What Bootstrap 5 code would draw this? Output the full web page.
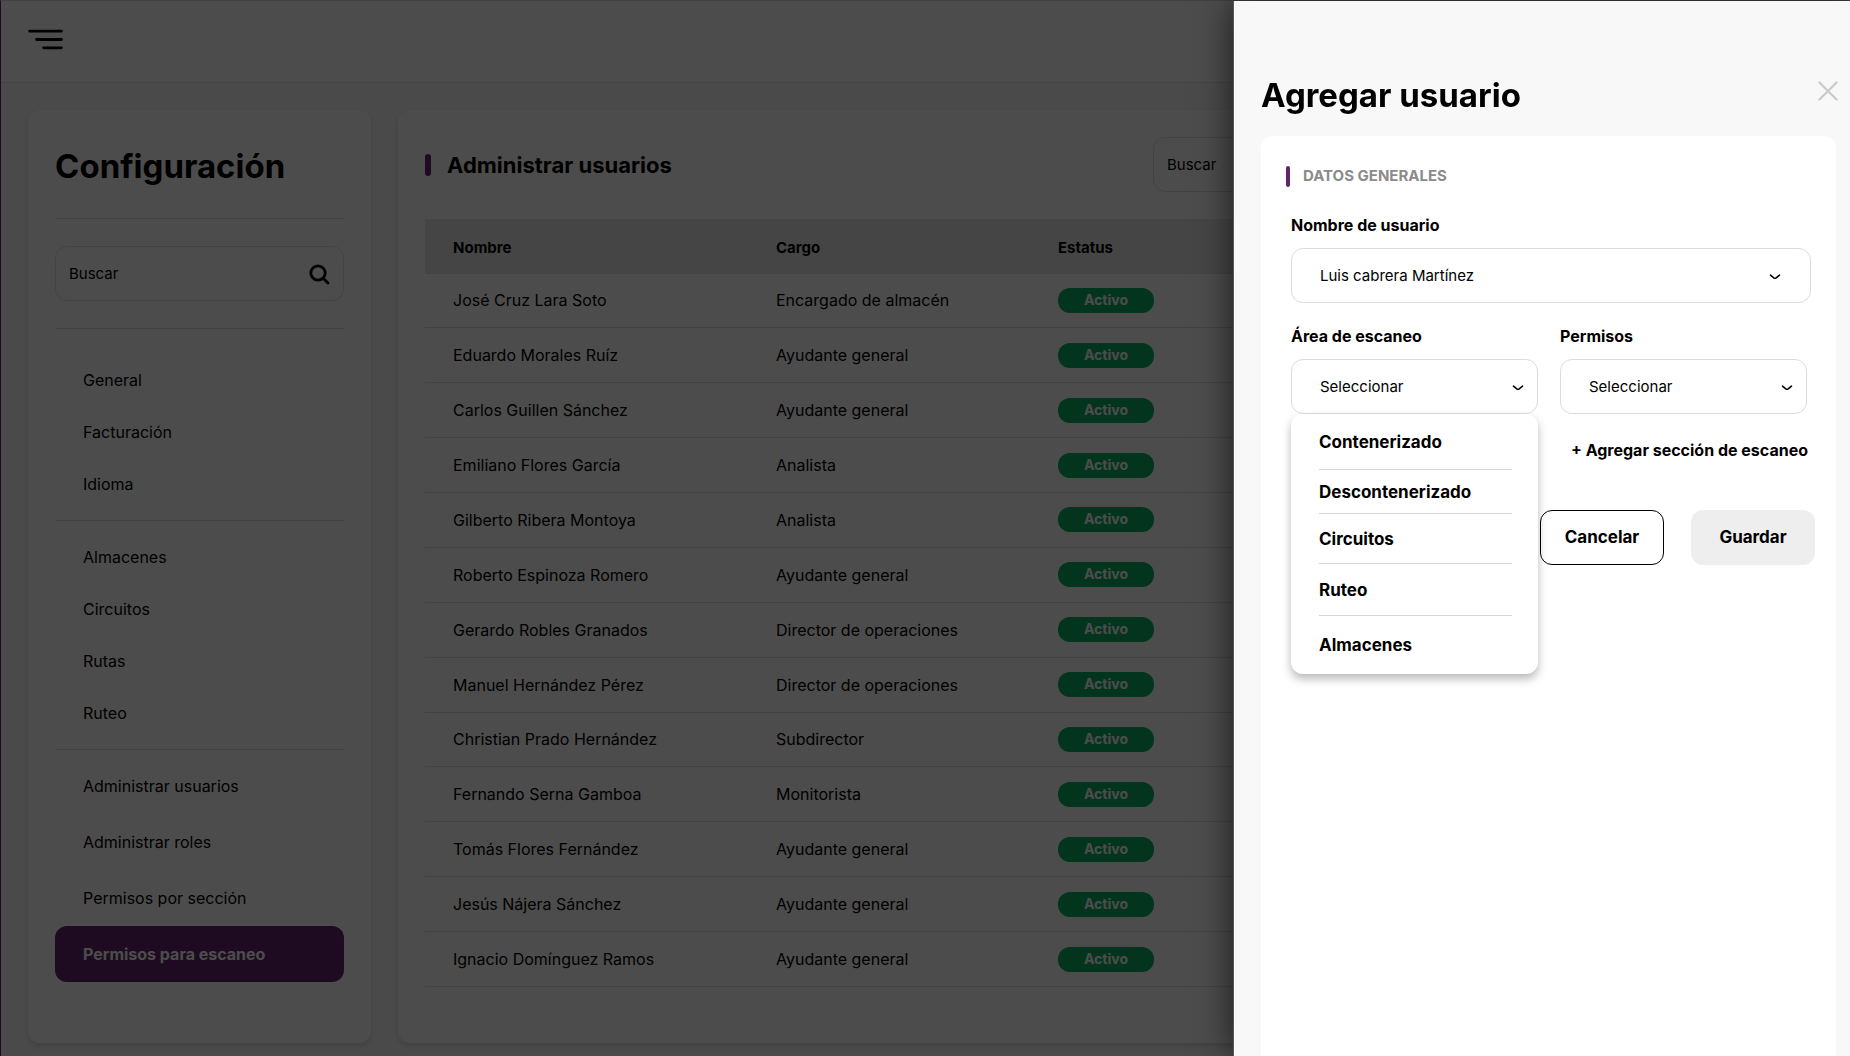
<!DOCTYPE html>
<html lang="es">
<head>
<meta charset="utf-8">
<meta name="viewport" content="width=device-width, initial-scale=1">
<title>Configuración</title>
<link href="https://cdn.jsdelivr.net/npm/bootstrap@5.3.0/dist/css/bootstrap.min.css" rel="stylesheet">
<style>
  :root { --brand: #65236e; --line: #e1e1e1; --ok: #0cb166; }
  html { height: 100%; }
  body { min-height: 100%; font-family: Inter, "Liberation Sans", sans-serif; font-size: 16px; line-height: 24px; color: #000; background: #f8f8f8; overflow: hidden; }
  .app-frame { border-left: 1px solid var(--brand); border-top: 1px solid #dedede; min-height: 100vh; }
  .app-header { height: 82px; padding: 0 27px 4px; background: #fff; border-bottom: 1px solid var(--line); }
  .menu-toggle { padding: 0; border: 0; background: none; line-height: 0; }
  .app-main { padding: 27px; gap: 27px; }
  .panel { background: #fff; border-radius: 12px; box-shadow: 0 3px 6px rgba(0,0,0,.12); padding: 27px; }
  .panel-side { width: 343px; flex: none; padding-bottom: 61px; }
  .panel-users { min-width: 0; }
  .side-title { font-size: 33px; line-height: 40px; font-weight: 700; margin: 9px 0 32px; }
  .rule { border: 0; border-top: 1px solid #dcdcdc; opacity: 1; margin: 0; }
  .search-box { height: 55px; border: 1px solid var(--line); border-radius: 12px; padding: 2px 13px 0; background: #fff; }
  .search-box input { border: 0; padding: 0; background: transparent; font-size: 15px; color: #000; min-width: 0; }
  .search-box input::placeholder { color: #000; opacity: 1; }
  .side-search { margin: 27px 0; }
  .side-nav { padding: 25px 0 10px; }
  .side-nav + .rule + .side-nav { padding-top: 10px; }
  .side-nav .nav-link { padding: 14px 28px; color: #000; line-height: 24px; }
  .side-nav + .rule + .side-nav.admin-nav { padding: 8px 0 0; }
  .side-nav.admin-nav .nav-link { padding: 16px 28px; }
  .side-nav .nav-link.active { font-weight: 700; color: #fff; background: var(--brand); border-radius: 12px; }
  .users-head { height: 55px; margin-bottom: 27px; }
  .section-title { font-size: 22px; line-height: 28px; font-weight: 700; margin: 0; }
  .bar-thick { width: 6px; height: 22px; border-radius: 3px; background: var(--brand); margin-right: 16px; }
  .users-table { --bs-table-bg: transparent; table-layout: fixed; height: 768px; margin: 0; color: #000; }
  .users-table th, .users-table td { height: 54px; padding: 0 0 0 28px; vertical-align: middle; border-bottom: 1px solid var(--line); color: #000; }
  .users-table thead th { font-size: 15px; font-weight: 700; background: #e8e8e8; padding-top: 4px; }
  .status-pill { display: block; width: 96px; height: 25px; line-height: 24px; border-radius: 12px; background: var(--ok); color: #fff; font-size: 14px; font-weight: 700; text-align: center; }
  .offcanvas-backdrop.show { opacity: .7; }
  .drawer.offcanvas-end { width: 617px; top: 1px; border: 0; border-left: 1px solid #5a5a5a; background: #f8f8f8; color: #000; box-shadow: 0 0 32px rgba(0,0,0,.65); padding: 74px 14px 0 27px; }
  .drawer-title { font-size: 33px; line-height: 40px; font-weight: 700; margin: 0; }
  .drawer-close { padding: 0; border: 0; background: none; line-height: 0; margin: 6px -2px 0 0; }
  .drawer-card { background: #fff; border-radius: 12px 12px 0 0; margin-top: 21px; padding: 28px 25px 27px 30px; }
  .group-title { font-size: 15px; line-height: 24px; font-weight: 700; color: #8b8b8b; margin: 0; }
  .bar-thin { width: 4px; height: 21px; border-radius: 2px; background: var(--brand); margin: 0 13px 0 -5px; }
  .group-head { margin-bottom: 25px; }
  .field-label { font-weight: 700; line-height: 24px; margin-bottom: 11px; display: block; }
  .field-select { height: 55px; border: 1px solid #dcdcdc; border-radius: 12px; padding: 2px 40px 0 28px; font-size: 15px; color: #000;
    background-image: url("data:image/svg+xml,%3Csvg xmlns='http://www.w3.org/2000/svg' viewBox='0 0 12 6'%3E%3Cpath d='M1.5 1.2 4.8 3.8Q6 4.7 7.2 3.8L10.5 1.2' fill='none' stroke='%23000' stroke-width='1.6' stroke-linecap='round'/%3E%3C/svg%3E");
    background-size: 12px 6px; background-position: right 13px top 25px; }
  .field-select.wide { background-position: right 29px top 25px; }
  .field-pair { margin-top: 21px; gap: 22px; }
  .area-menu.dropdown-menu { top: 100%; left: 0; width: 100%; border: 0; border-radius: 12px; padding: 0 26px 0 28px; box-shadow: 0 5px 10px rgba(0,0,0,.28); margin: 0; }
  .area-menu li { display: flex; align-items: center; height: 50px; border-bottom: 1px solid #d6d6d6; }
  .area-menu li:first-child { height: 56px; }
  .area-menu li:nth-child(2) { height: 44px; }
  .area-menu li:nth-child(4) { height: 52px; }
  .area-menu li:last-child { height: 58px; border: 0; }
  .area-menu .dropdown-item { padding: 0; font-weight: 700; font-size: 17px; line-height: 24px; color: #000; background: none; }
  .add-link { font-weight: 700; color: #000; text-decoration: none; margin-right: 3px; }
  .btn-action { width: 124px; height: 55px; border-radius: 12px; font-size: 17px; font-weight: 700; padding: 0; color: #000; }
  .btn-cancel { border: 1px solid #000; background: #fff; }
  .btn-save { border: 0; background: #eee; }
  .action-row { margin: 48px -4px 0 0; gap: 27px; }
</style>
<script src="https://cdn.jsdelivr.net/npm/bootstrap@5.3.0/dist/js/bootstrap.bundle.min.js"></script>
</head>
<body>
<div class="app-frame">
  <header class="app-header d-flex align-items-center">
    <button class="menu-toggle" type="button" aria-label="Menú">
      <svg width="35" height="21" viewBox="0 0 35 21" fill="none" stroke="#000" stroke-width="2.8" stroke-linecap="round"><path d="M1.6 2.2H33.4M8.6 10.5H33.4M15.6 18.8H33.4"/></svg>
    </button>
  </header>

  <main class="app-main d-flex">
    <aside class="panel panel-side">
      <h1 class="side-title">Configuración</h1>
      <hr class="rule">
      <div class="search-box side-search d-flex align-items-center">
        <input class="form-control shadow-none" type="search" placeholder="Buscar" aria-label="Buscar en configuración">
        <svg class="flex-shrink-0" width="21" height="21" viewBox="0 0 21 21" fill="none" stroke="#000" stroke-width="2.8" stroke-linecap="round"><circle cx="9" cy="9" r="7.2"/><path d="M14.4 14.4 19 19"/></svg>
      </div>
      <hr class="rule">
      <nav class="side-nav nav flex-column">
        <a class="nav-link" href="#">General</a>
        <a class="nav-link" href="#">Facturación</a>
        <a class="nav-link" href="#">Idioma</a>
      </nav>
      <hr class="rule">
      <nav class="side-nav nav flex-column">
        <a class="nav-link" href="#">Almacenes</a>
        <a class="nav-link" href="#">Circuitos</a>
        <a class="nav-link" href="#">Rutas</a>
        <a class="nav-link" href="#">Ruteo</a>
      </nav>
      <hr class="rule">
      <nav class="side-nav admin-nav nav flex-column">
        <a class="nav-link" href="#">Administrar usuarios</a>
        <a class="nav-link" href="#">Administrar roles</a>
        <a class="nav-link" href="#">Permisos por sección</a>
        <a class="nav-link active" href="#">Permisos para escaneo</a>
      </nav>
    </aside>

    <section class="panel panel-users flex-grow-1">
      <div class="users-head row g-0 align-items-center">
        <div class="col d-flex align-items-center">
          <span class="bar-thick"></span>
          <h2 class="section-title">Administrar usuarios</h2>
        </div>
        <div class="col-auto" style="width:643px">
          <div class="search-box d-flex align-items-center">
            <input class="form-control shadow-none" type="search" placeholder="Buscar" aria-label="Buscar usuario">
          </div>
        </div>
      </div>
      <table class="users-table table">
        <colgroup><col style="width:323px"><col style="width:282px"><col></colgroup>
        <thead><tr><th>Nombre</th><th>Cargo</th><th>Estatus</th></tr></thead>
        <tbody>
          <tr><td>José Cruz Lara Soto</td><td>Encargado de almacén</td><td><span class="status-pill">Activo</span></td></tr>
          <tr><td>Eduardo Morales Ruíz</td><td>Ayudante general</td><td><span class="status-pill">Activo</span></td></tr>
          <tr><td>Carlos Guillen Sánchez</td><td>Ayudante general</td><td><span class="status-pill">Activo</span></td></tr>
          <tr><td>Emiliano Flores García</td><td>Analista</td><td><span class="status-pill">Activo</span></td></tr>
          <tr><td>Gilberto Ribera Montoya</td><td>Analista</td><td><span class="status-pill">Activo</span></td></tr>
          <tr><td>Roberto Espinoza Romero</td><td>Ayudante general</td><td><span class="status-pill">Activo</span></td></tr>
          <tr><td>Gerardo Robles Granados</td><td>Director de operaciones</td><td><span class="status-pill">Activo</span></td></tr>
          <tr><td>Manuel Hernández Pérez</td><td>Director de operaciones</td><td><span class="status-pill">Activo</span></td></tr>
          <tr><td>Christian Prado Hernández</td><td>Subdirector</td><td><span class="status-pill">Activo</span></td></tr>
          <tr><td>Fernando Serna Gamboa</td><td>Monitorista</td><td><span class="status-pill">Activo</span></td></tr>
          <tr><td>Tomás Flores Fernández</td><td>Ayudante general</td><td><span class="status-pill">Activo</span></td></tr>
          <tr><td>Jesús Nájera Sánchez</td><td>Ayudante general</td><td><span class="status-pill">Activo</span></td></tr>
          <tr><td>Ignacio Domínguez Ramos</td><td>Ayudante general</td><td><span class="status-pill">Activo</span></td></tr>
        </tbody>
      </table>
    </section>
  </main>
</div>

<div class="offcanvas-backdrop show"></div>

<div class="drawer offcanvas offcanvas-end show" data-bs-backdrop="false" data-bs-scroll="true" tabindex="-1" aria-labelledby="drawerTitle">
  <div class="d-flex justify-content-between align-items-start">
    <h2 class="drawer-title" id="drawerTitle">Agregar usuario</h2>
    <button class="drawer-close" type="button" aria-label="Cerrar">
      <svg width="20" height="20" viewBox="0 0 20 20" fill="none" stroke="#cbcbcb" stroke-width="2.4" stroke-linecap="round"><path d="M1.5 1.5 18.5 18.5M18.5 1.5 1.5 18.5"/></svg>
    </button>
  </div>
  <form class="drawer-card flex-grow-1">
    <div class="group-head d-flex align-items-center">
      <span class="bar-thin"></span>
      <h3 class="group-title">DATOS GENERALES</h3>
    </div>
    <label class="field-label" for="userName">Nombre de usuario</label>
    <select class="form-select field-select wide" id="userName"><option>Luis cabrera Martínez</option></select>

    <div class="field-pair d-flex pe-1">
      <div class="flex-fill">
        <label class="field-label" for="scanArea">Área de escaneo</label>
        <div class="dropdown">
          <select class="form-select field-select" id="scanArea"><option>Seleccionar</option></select>
          <ul class="area-menu dropdown-menu show">
            <li><a class="dropdown-item" href="#">Contenerizado</a></li>
            <li><a class="dropdown-item" href="#">Descontenerizado</a></li>
            <li><a class="dropdown-item" href="#">Circuitos</a></li>
            <li><a class="dropdown-item" href="#">Ruteo</a></li>
            <li><a class="dropdown-item" href="#">Almacenes</a></li>
          </ul>
        </div>
      </div>
      <div class="flex-fill">
        <label class="field-label" for="permits">Permisos</label>
        <select class="form-select field-select" id="permits"><option>Seleccionar</option></select>
      </div>
    </div>

    <div class="d-flex justify-content-end mt-4">
      <a class="add-link" href="#">+ Agregar sección de escaneo</a>
    </div>
    <div class="action-row d-flex justify-content-end">
      <button class="btn btn-action btn-cancel" type="button">Cancelar</button>
      <button class="btn btn-action btn-save" type="submit">Guardar</button>
    </div>
  </form>
</div>
</body>
</html>
